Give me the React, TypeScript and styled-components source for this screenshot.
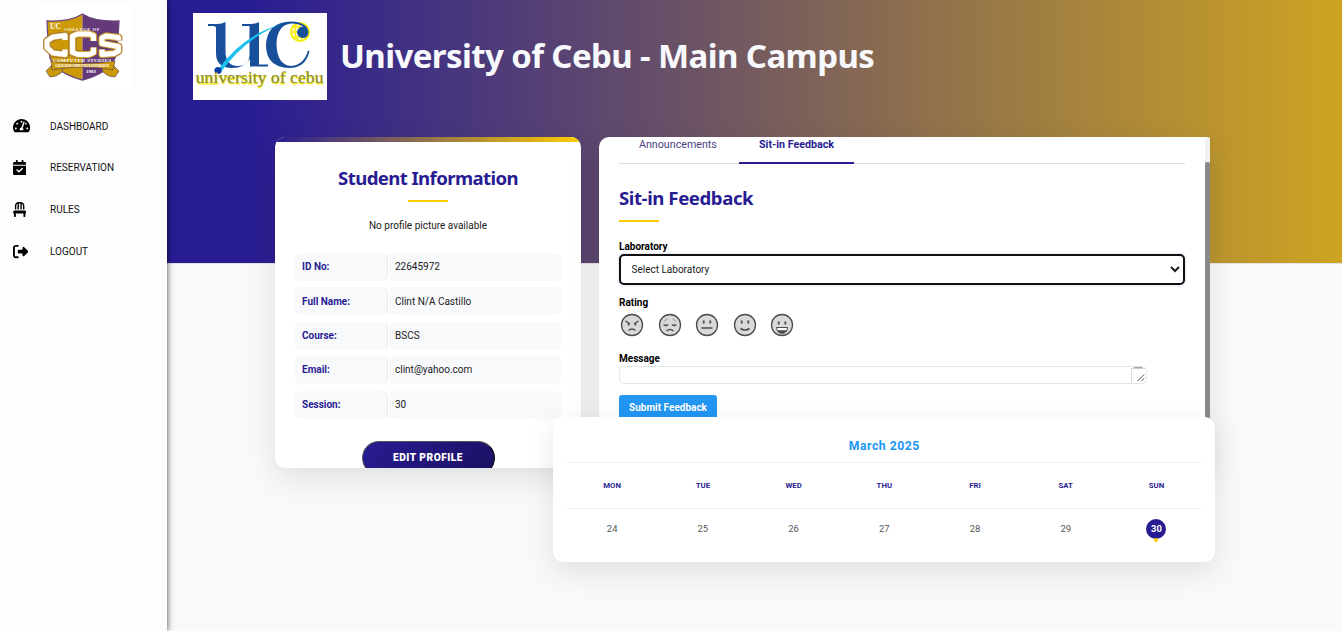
import React from "react";
import styled, { createGlobalStyle } from "styled-components";
import { FaTachometerAlt } from "react-icons/fa";
import { FaCalendarCheck, FaChair, FaRightFromBracket } from "react-icons/fa6";

const Global = createGlobalStyle`
  *, *::before, *::after { box-sizing: border-box; }
  html, body { margin: 0; height: 100%; overflow: hidden; }
  body { background: #f8f9fb; font-family: Roboto, "Liberation Sans", sans-serif; font-size: 10px; color: #1b1b1b; }
`;

const Page = styled.div`
  display: flex;
  width: 1342px;
  height: 631px;
  overflow: hidden;
`;

const Sidebar = styled.nav`
  position: relative;
  z-index: 2;
  width: 167px;
  flex: none;
  background: #fdfdfd;
  box-shadow: 0 0 6px rgba(0, 0, 0, 0.75);
`;

const Crest = styled.div`
  width: 100px;
  height: 86px;
  margin: 4px 0 15.67px 33px;
  background: #fff;
`;

const NavItem = styled.a`
  display: flex;
  align-items: center;
  height: 41.75px;
  padding-left: 13px;
  color: #111;
  font-size: 10px;
  line-height: 14px;
`;

const NavIcon = styled.span<{ $width: number }>`
  display: flex;
  width: 37px;
  margin-top: -1px;
  svg {
    width: ${(p) => p.$width}px;
    height: 15.2px;
    color: #000;
  }
`;

const Main = styled.main`
  flex: 1;
  height: 631px;
  background:
    linear-gradient(#e3e2e6, #e3e2e6) 0 263px / 100% 1px no-repeat,
    linear-gradient(90deg, #281c93 0, #281c93 80px, #ffcc00 1500px) 0 0 / 1500px 263px no-repeat,
    #f8f9fb;
`;

const Banner = styled.header`
  display: flex;
  align-items: center;
  height: 100px;
  padding: 13px 0 0 26px;
  gap: 13px;
`;

const BannerLogo = styled.div`
  width: 134px;
  height: 87px;
  background: #fff;
`;

const BannerTitle = styled.h1`
  margin: -2px 0 0;
  font: 700 33px/44px "Noto Sans", "Open Sans", sans-serif;
  letter-spacing: -0.6px;
  color: #f8f9fc;
  white-space: nowrap;
`;

const Columns = styled.div`
  display: flex;
  gap: 18px;
  margin: 37px 0 0 108px;
`;

const Card = styled.section`
  height: 331px;
  background: #fff;
  overflow: hidden;
  box-shadow: 0 10px 30px rgba(0, 0, 0, 0.1);
`;

const StudentCard = styled(Card)`
  width: 306px;
  border-radius: 10px;
  text-align: center;
`;

const Stripe = styled.div`
  height: 5px;
  background: linear-gradient(90deg, #281c93, #ffcc00);
`;

const Title = styled.h2`
  margin: 0;
  font: 700 18.6px/26px "Noto Sans", "Open Sans", sans-serif;
  letter-spacing: -0.42px;
  color: #281c93;
  &::after {
    content: "";
    display: block;
    width: 40px;
    height: 2px;
    margin-top: 9px;
    background: #ffcc00;
  }
`;

const StudentTitle = styled(Title)`
  margin-top: 23px;
  letter-spacing: -0.6px;
  &::after { margin-left: auto; margin-right: auto; }
`;

const NoPicture = styled.p`
  margin: 17px 0 20px;
  line-height: 14px;
`;

const InfoRow = styled.div`
  display: flex;
  gap: 1px;
  margin: 0 20px 6.4px;
  height: 28px;
  line-height: 27.8px;
  text-align: left;
`;

const InfoLabel = styled.div`
  width: 93px;
  padding: 0.25px 0 0 7px;
  border-radius: 5px;
  border-right: 1px solid #e9eaee;
  background: #f8f9fb;
  color: #281c93;
  font-weight: 700;
`;

const InfoValue = styled.div`
  flex: 1;
  padding: 0.25px 0 0 6px;
  border-radius: 5px;
  background: #f8f9fb;
`;

const EditButton = styled.button`
  display: block;
  width: 133px;
  height: 34px;
  margin: 22px auto 0;
  padding: 0;
  border: 1.5px outset #555;
  border-radius: 17px;
  background: linear-gradient(135deg, #281c93, #1a1060);
  color: #fff;
  font: 900 10.2px/14px Roboto, sans-serif;
  letter-spacing: 0.5px;
`;

const FeedbackCard = styled(Card)`
  display: flex;
  justify-content: space-between;
  width: 611px;
  border-radius: 10px 3px 3px 10px;
`;

const FeedbackBody = styled.div`
  width: 566px;
  margin-left: 20px;
`;

const ScrollTrack = styled.div`
  width: 5px;
  padding-top: 25px;
  background: #f1f1f1;
`;

const ScrollThumb = styled.div`
  height: 300px;
  border-radius: 2px;
  background: #888;
`;

const Tabs = styled.div`
  display: flex;
  height: 27px;
  border-bottom: 1px solid #ddd;
`;

const Tab = styled.div<{ $active?: boolean }>`
  height: 27px;
  padding: 0 20px;
  border-bottom: 2px solid ${(p) => (p.$active ? "#281c93" : "transparent")};
  color: ${(p) => (p.$active ? "#281c93" : "#4b437f")};
  font-size: 10.7px;
  font-weight: ${(p) => (p.$active ? 700 : 400)};
  line-height: 15px;
  width: ${(p) => (p.$active ? 115 : 120)}px;
  white-space: nowrap;
`;

const FeedbackTitle = styled(Title)`
  margin-top: 21px;
`;

const FieldLabel = styled.label<{ $top: number }>`
  display: block;
  height: 12px;
  margin-top: ${(p) => p.$top}px;
  color: #000;
  font-weight: 700;
  line-height: 12px;
`;

const LabSelect = styled.select`
  display: block;
  width: 566px;
  height: 31px;
  margin-top: 1px;
  padding: 0 0 0 6.5px;
  border: 2px solid #101010;
  border-radius: 5px;
  box-shadow: 0 0 0 1.5px #eeecf9;
  background: #fff;
  color: #1b1b1b;
  font: 400 10px/14px Roboto, sans-serif;
`;

const Faces = styled.div`
  display: flex;
  gap: 13.5px;
  height: 24px;
  margin: 4px 0 0 1.4px;
`;

const MessageBox = styled.div`
  display: flex;
  justify-content: flex-end;
  width: 528px;
  height: 18px;
  margin-top: 1px;
  border: 1px solid #e3e6ea;
  border-radius: 5px;
`;

const SubmitButton = styled.button`
  display: block;
  width: 98px;
  height: 30px;
  margin-top: 11px;
  padding: 0 0 4px;
  border: 0;
  border-radius: 3px;
  background: #2196f3;
  color: #fff;
  font: 700 10px/14px Roboto, sans-serif;
`;

const Calendar = styled.section`
  position: relative;
  width: 662px;
  height: 145px;
  margin: -51px 0 0 386px;
  padding: 17px 13.2px 0 13.8px;
  border-radius: 10px;
  background: #fff;
  box-shadow: 0 10px 30px rgba(0, 0, 0, 0.1);
`;

const Month = styled.div`
  height: 29px;
  border-bottom: 1px solid #f0f0f0;
  color: #2196f3;
  font-size: 12.2px;
  font-weight: 700;
  letter-spacing: 0.53px;
  line-height: 25px;
  text-align: center;
`;

const Week = styled.div`
  display: grid;
  grid-template-columns: repeat(7, 1fr);
  justify-items: center;
`;

const WeekHead = styled(Week)`
  height: 46px;
  border-bottom: 1px solid #f0f0f0;
  color: #281c93;
  font-size: 7.8px;
  font-weight: 700;
  line-height: 45px;
`;

const Day = styled.div<{ $today?: boolean }>`
  position: relative;
  width: 20px;
  height: 20px;
  margin-top: 10px;
  border-radius: 50%;
  background: ${(p) => (p.$today ? "#281c93" : "none")};
  color: ${(p) => (p.$today ? "#fff" : "#555")};
  font-size: 9.4px;
  font-weight: ${(p) => (p.$today ? 700 : 400)};
  line-height: 20px;
  text-align: center;
`;

const TodayDot = styled.span`
  position: absolute;
  left: 8px;
  bottom: -3px;
  width: 4px;
  height: 4px;
  border-radius: 50%;
  background: #ffcc00;
`;

const crestLetters = (
  <path d="M32 36V31.500L20 33L14 37V43.500L20 49L32 50.500V45.500M60.500 37V31.500L56 30H45L39.500 32V48.500L45 50.500H56L60.500 48.500V43.500M85.500 36.500V33.500L73 32L69 34V39.500L85.500 42.500V47L81 49.500L69 50.500V45.500" />
);

const CrestArt = () => (
  <svg width="100" height="86" viewBox="0 0 100 86">
    <path d="M49.500 10Q37 18 14 17Q15 40 17 54Q23 69 49.500 76Z" fill="#cb9a06" />
    <path d="M49.500 10Q62 18 86 17Q85 40 82 54Q76 69 49.500 76Z" fill="#64397a" />
    <path d="M49.500 10Q37 18 14 17Q15 40 17 54Q23 69 49.500 76Q76 69 82 54Q85 40 86 17Q62 18 49.500 10Z" fill="none" stroke="#6c4780" strokeWidth="1.300" />
    <g fill="#cb9a06" stroke="#6b4a5a" strokeWidth=".7">
      <path d="M18 62L13 67L17 73Q24 73 29 68L30 63ZM81 62L86 67L82 73Q75 73 70 68L69 63Z" />
      <path d="M18 57Q49 62 82 57L80 66Q49 60 19 66Z" />
    </g>
    <g fill="none" strokeLinejoin="round">
      <g stroke="#8c5d4c" strokeWidth="7.800">{crestLetters}</g>
      <g stroke="#d3a83a" strokeWidth="6.800">{crestLetters}</g>
      <g stroke="#fff" strokeWidth="5">{crestLetters}</g>
    </g>
    <g fill="#fff" fontFamily="Liberation Serif, serif" fontWeight="700" textAnchor="middle">
      <text x="22.500" y="25" fontSize="7.500">UC</text>
      <text x="49" y="26.500" fontSize="4.600" textLength="35">COLLEGE OF</text>
      <text x="49" y="57.500" fontSize="5" textLength="58">COMPUTER STUDIES</text>
      <text x="49" y="62.500" fontSize="3.200" textLength="54">COLLEGIUM COMPUTATRALIS STUDIORUM</text>
      <text x="58" y="69" fontSize="5">1983</text>
    </g>
  </svg>
);

const UniversityArt = () => (
  <svg width="134" height="87" viewBox="0 0 134 87">
    <circle cx="107" cy="19" r="9" fill="#fffbd0" stroke="#f5ec0a" strokeWidth="2" />
    <path d="M98 19H108M99.500 14H108M100 24H114M104 10Q99 18 105 28M108 10Q103 18 110 28" stroke="#f5ec0a" strokeWidth="1.300" fill="none" />
    <g fill="#174f9b">
      <path d="M15 11H24Q29 11 32.500 9V39Q33 53 45 53Q56 53 56.500 42V13H49V11H57Q63 11 66 9V51.500H75V53.500H57V46Q51 55 39 55Q23 55 23 40V15Q23 13 20 13H15Z" />
      <path d="M116.500 38Q113 55 96 55Q73 54 73 32Q74 9 98 8.500Q114 9 115.500 19Q115 25 109.500 25Q104 24 104 19Q105 14 110 13.500Q106 10.500 98 10.500Q84 12 83.500 31Q84 52 98 53Q111 52 115 37.500Z" />
    </g>
    <path d="M24 58Q49 22 89 11Q53 24 28 59Z" fill="#1cc0ee" />
    <circle cx="25" cy="57.500" r="3.600" fill="#0b3fa8" />
    <g fontFamily="Liberation Serif, serif" fontSize="17.500">
      <text x="3.500" y="70.500" fill="#f3e91c" stroke="#f3e91c" strokeWidth=".8" textLength="127" lengthAdjust="spacingAndGlyphs">university of cebu</text>
      <text x="2.500" y="69.500" fill="#86874f" textLength="128" lengthAdjust="spacingAndGlyphs">university of cebu</text>
    </g>
  </svg>
);

const openEyes = <path d="M8.700 7.500V10.500M15.300 7.500V10.500" strokeWidth="1.800" />;

const faces: React.ReactNode[] = [
  <><path d="M5.500 8L10 11M18.500 8L14 11M8.500 10V12.500M15.500 10V12.500" strokeWidth="1.500" /><path d="M8.500 17.500Q12 14.500 15.500 17.500" strokeWidth="1.500" /></>,
  <><path d="M6 8.500L9.500 5.500M18 8.500L14.500 5.500" stroke="#aaa" /><path d="M5.500 11.500Q8 13.500 10 11.500M14 11.500Q16 13.500 18.500 11.500" /><path d="M8.500 18Q12 15 15.500 18" strokeWidth="1.500" /></>,
  <>{openEyes}<path d="M6.500 15H17.500" strokeWidth="1.600" /></>,
  <>{openEyes}<path d="M7.500 15.500Q12 18.500 16.500 15.500" strokeWidth="1.600" /></>,
  <><path d="M8.700 8.500V11.500M15.300 8.500V11.500" strokeWidth="1.800" /><path d="M6.500 14.500H17.500Q17 20 12 20Q7 20 6.500 14.500Z" fill="#fff" strokeWidth="1" /><path d="M8 18H16Q14 20 12 20Q9 20 8 18Z" fill="#444" /></>,
];

const nav = [
  { label: "DASHBOARD", Icon: FaTachometerAlt, width: 17.1 },
  { label: "RESERVATION", Icon: FaCalendarCheck, width: 13.3 },
  { label: "RULES", Icon: FaChair, width: 13.3 },
  { label: "LOGOUT", Icon: FaRightFromBracket, width: 15.2 },
];

const info = [
  ["ID No:", "22645972"],
  ["Full Name:", "Clint N/A Castillo"],
  ["Course:", "BSCS"],
  ["Email:", "clint@yahoo.com"],
  ["Session:", "30"],
];

export default function App() {
  return (
    <>
      <Global />
      <Page>
        <Sidebar>
          <Crest><CrestArt /></Crest>
          {nav.map(({ label, Icon, width }) => (
            <NavItem key={label}><NavIcon $width={width}><Icon /></NavIcon>{label}</NavItem>
          ))}
        </Sidebar>
        <Main>
          <Banner>
            <BannerLogo><UniversityArt /></BannerLogo>
            <BannerTitle>University of Cebu - Main Campus</BannerTitle>
          </Banner>
          <Columns>
            <StudentCard>
              <Stripe />
              <StudentTitle>Student Information</StudentTitle>
              <NoPicture>No profile picture available</NoPicture>
              {info.map(([label, value]) => (
                <InfoRow key={label}><InfoLabel>{label}</InfoLabel><InfoValue>{value}</InfoValue></InfoRow>
              ))}
              <EditButton>EDIT PROFILE</EditButton>
            </StudentCard>
            <FeedbackCard>
              <FeedbackBody>
                <Tabs><Tab>Announcements</Tab><Tab $active>Sit-in Feedback</Tab></Tabs>
                <FeedbackTitle>Sit-in Feedback</FeedbackTitle>
                <FieldLabel $top={19}>Laboratory</FieldLabel>
                <LabSelect><option>Select Laboratory</option></LabSelect>
                <FieldLabel $top={12}>Rating</FieldLabel>
                <Faces>
                  {faces.map((face, i) => (
                    <svg key={i} width="24" height="24" viewBox="0 0 24 24" fill="none" stroke="#4c4c4c" strokeWidth="1.300">
                      <circle cx="12" cy="12" r="10.500" fill="#d9d9d9" />
                      {face}
                    </svg>
                  ))}
                </Faces>
                <FieldLabel $top={16}>Message</FieldLabel>
                <MessageBox>
                  <svg width="15" height="16" viewBox="0 0 16 17" fill="none">
                    <path d="M.5 16.500V1.500H15" stroke="#d5d5d5" />
                    <path d="M3 .7H12" stroke="#888" />
                    <path d="M7 15L14 8M11 15L14 12" stroke="#444" />
                  </svg>
                </MessageBox>
                <SubmitButton>Submit Feedback</SubmitButton>
              </FeedbackBody>
              <ScrollTrack><ScrollThumb /></ScrollTrack>
            </FeedbackCard>
          </Columns>
          <Calendar>
            <Month>March 2025</Month>
            <WeekHead>{["MON", "TUE", "WED", "THU", "FRI", "SAT", "SUN"].map((d) => <span key={d}>{d}</span>)}</WeekHead>
            <Week>
              {[24, 25, 26, 27, 28, 29, 30].map((d) => (
                <Day key={d} $today={d === 30}>{d}{d === 30 && <TodayDot />}</Day>
              ))}
            </Week>
          </Calendar>
        </Main>
      </Page>
    </>
  );
}
